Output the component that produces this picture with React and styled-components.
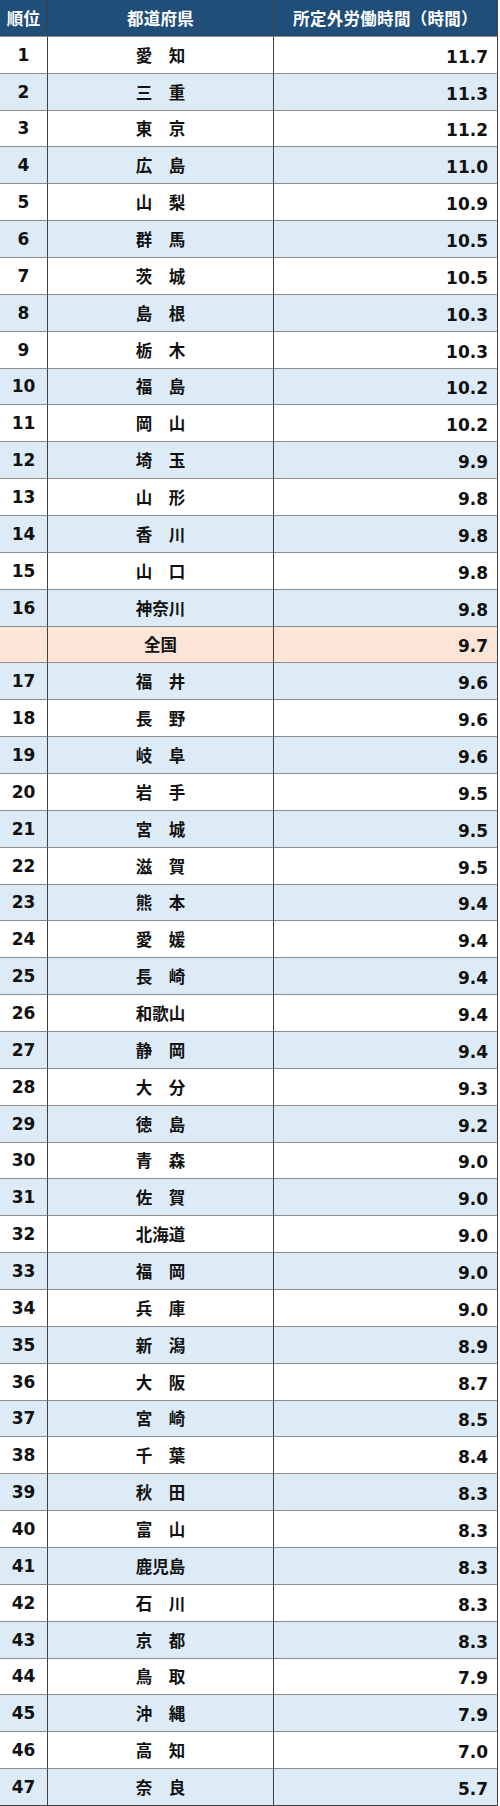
import React from 'react';
import styled, { createGlobalStyle } from 'styled-components';

const GlobalStyle = createGlobalStyle`
  body {
    margin: 0;
    background: #ffffff;
  }
`;

const HeaderBlue = '#1F4E78';
const RowBlue = '#DDEBF7';
const RowPeach = '#FCE4D6';

const rows = [
  ['1', '愛　知', '11.7'],
  ['2', '三　重', '11.3'],
  ['3', '東　京', '11.2'],
  ['4', '広　島', '11.0'],
  ['5', '山　梨', '10.9'],
  ['6', '群　馬', '10.5'],
  ['7', '茨　城', '10.5'],
  ['8', '島　根', '10.3'],
  ['9', '栃　木', '10.3'],
  ['10', '福　島', '10.2'],
  ['11', '岡　山', '10.2'],
  ['12', '埼　玉', '9.9'],
  ['13', '山　形', '9.8'],
  ['14', '香　川', '9.8'],
  ['15', '山　口', '9.8'],
  ['16', '神奈川', '9.8'],
  ['', '全国', '9.7'],
  ['17', '福　井', '9.6'],
  ['18', '長　野', '9.6'],
  ['19', '岐　阜', '9.6'],
  ['20', '岩　手', '9.5'],
  ['21', '宮　城', '9.5'],
  ['22', '滋　賀', '9.5'],
  ['23', '熊　本', '9.4'],
  ['24', '愛　媛', '9.4'],
  ['25', '長　崎', '9.4'],
  ['26', '和歌山', '9.4'],
  ['27', '静　岡', '9.4'],
  ['28', '大　分', '9.3'],
  ['29', '徳　島', '9.2'],
  ['30', '青　森', '9.0'],
  ['31', '佐　賀', '9.0'],
  ['32', '北海道', '9.0'],
  ['33', '福　岡', '9.0'],
  ['34', '兵　庫', '9.0'],
  ['35', '新　潟', '8.9'],
  ['36', '大　阪', '8.7'],
  ['37', '宮　崎', '8.5'],
  ['38', '千　葉', '8.4'],
  ['39', '秋　田', '8.3'],
  ['40', '富　山', '8.3'],
  ['41', '鹿児島', '8.3'],
  ['42', '石　川', '8.3'],
  ['43', '京　都', '8.3'],
  ['44', '鳥　取', '7.9'],
  ['45', '沖　縄', '7.9'],
  ['46', '高　知', '7.0'],
  ['47', '奈　良', '5.7'],
];

const Table = styled.div`
  display: grid;
  grid-template-columns: 48px 226px 224px;
  grid-template-rows: repeat(49, 1fr);
  width: 498px;
  height: 1806px;
  font-family: 'DejaVu Sans', 'Noto Sans CJK JP', sans-serif;
  font-weight: 700;
  color: #111111;
`;

const Row = styled.div`
  display: contents;
`;

const Cell = styled.div`
  display: flex;
  justify-content: ${(p) => (p.$align === 'right' ? 'flex-end' : 'center')};
  align-items: ${(p) => (p.$align === 'right' ? 'flex-end' : 'center')};
  padding: ${(p) => (p.$align === 'right' ? '0 9px 6px 0' : '0')};
  box-sizing: border-box;
  background: ${(p) => p.$bg};
  border-right: 1px solid #404040;
  border-bottom: 1px solid ${(p) => (p.$last ? '#404040' : '#8c8c8c')};
  font-size: ${(p) => (p.$jp ? '16.5px' : '17px')};
  font-family: ${(p) =>
    p.$jp ? "'Noto Sans CJK JP', sans-serif" : "'DejaVu Sans', sans-serif"};
  white-space: pre;
`;

const HeadCell = styled.div`
  display: flex;
  justify-content: center;
  align-items: center;
  background: ${HeaderBlue};
  color: #ffffff;
  font-family: 'Noto Sans CJK JP', sans-serif;
  font-size: 16.5px;
  font-weight: 700;
  border-right: 1px solid #404040;
  border-bottom: 1px solid #8c8c8c;
  box-sizing: border-box;
  letter-spacing: 0.3px;
`;

function rowColor(i, rank) {
  if (rank === '') return RowPeach;
  return i % 2 === 0 ? '#ffffff' : RowBlue;
}

export default function App() {
  return (
    <>
      <GlobalStyle />
      <Table>
        <HeadCell>順位</HeadCell>
        <HeadCell>都道府県</HeadCell>
        <HeadCell>所定外労働時間（時間）</HeadCell>
        {rows.map(([rank, pref, hours], i) => {
          const bg = rowColor(i, rank);
          const last = i === rows.length - 1;
          return (
            <Row key={i}>
              <Cell $bg={bg} $last={last}>{rank}</Cell>
              <Cell $bg={bg} $last={last} $jp>{pref}</Cell>
              <Cell $bg={bg} $last={last} $align="right">{hours}</Cell>
            </Row>
          );
        })}
      </Table>
    </>
  );
}
